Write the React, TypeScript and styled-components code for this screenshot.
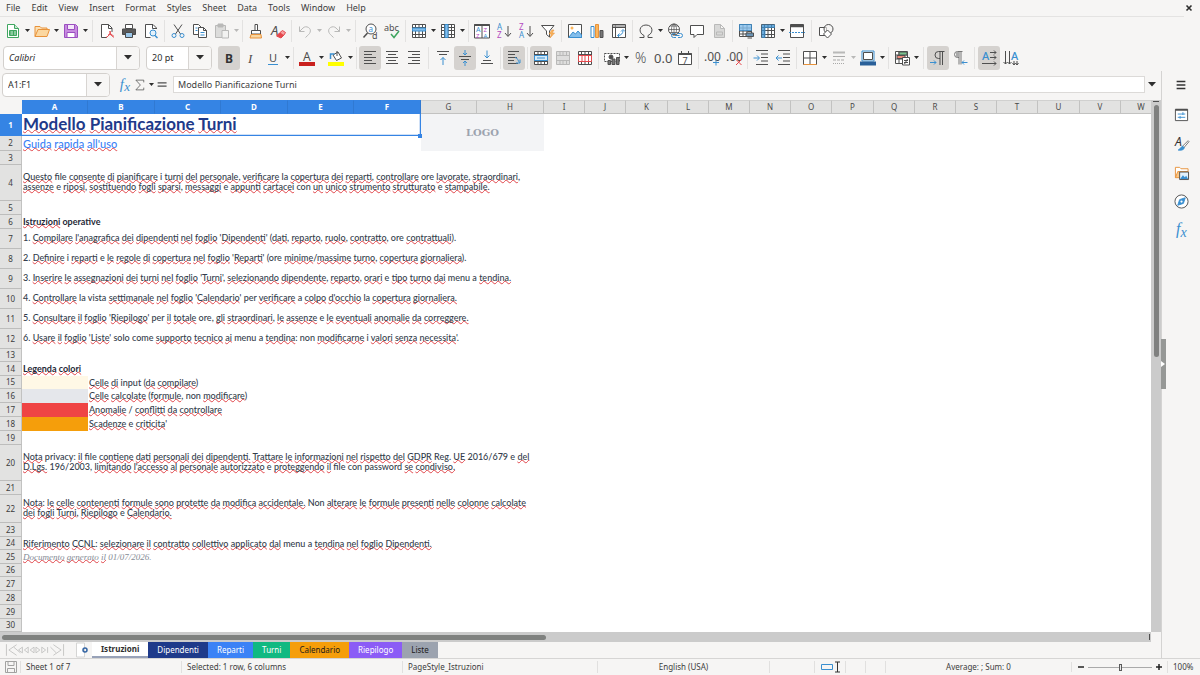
import React from 'react';
import styled, { createGlobalStyle, css } from 'styled-components';

const UI = '"Noto Sans", "Open Sans", sans-serif';
const DARK = '#4f4f4f';
const BLUE = '#3a8fd0';
const PALE = '#83beec';
const ORANGE = '#e8923a';
const RED = '#e5484d';
const GREEN = '#3fa660';
const PURPLE = '#b44ac0';
const GREY = '#b9b9b8';

const GlobalStyle = createGlobalStyle`
  * { box-sizing: border-box; }
  html, body, #root { height: 100%; }
  body { margin: 0; background: #f6f5f4; font-family: ${UI}; color: #3d3d3d; overflow: hidden; }
  button, input { font: inherit; color: inherit; margin: 0; padding: 0; border: 0; background: none; }
  svg { display: block; flex: none; overflow: visible; }
`;

const Window = styled.div`
  display: flex;
  flex-direction: column;
  height: 100vh;
  background: #f6f5f4;
`;

const MenuBar = styled.nav`
  display: flex;
  align-items: center;
  gap: 11px;
  height: 17px;
  flex: none;
  margin-right: 16px;
  padding-left: 6px;
  border-bottom: 1px solid #e4e3e2;
  font-size: 9px;
  line-height: 12px;
`;
const MenuItem = styled.button``;
const CloseButton = styled.button`
  position: absolute;
  top: 3px;
  right: 6px;
  width: 10px;
  height: 10px;
`;

const Toolbar = styled.div<{ $pad: number }>`
  display: flex;
  align-items: center;
  flex: none;
  height: 27px;
  padding-left: ${(p) => p.$pad}px;
`;
const Tool = styled.button<{ $on?: boolean }>`
  display: flex;
  align-items: center;
  justify-content: center;
  flex: none;
  width: 22px;
  height: 24px;
  border-radius: 3px;
  ${(p) => p.$on && css`background: #d5d2cf;`}
`;
const CaretButton = styled.button<{ $off?: boolean }>`
  display: flex;
  align-items: center;
  justify-content: center;
  flex: none;
  width: 7px;
  height: 24px;
  color: ${(p) => (p.$off ? '#b9b9b8' : '#2e2e2e')};
`;
const Separator = styled.span<{ $wide?: boolean }>`
  flex: none;
  width: 1px;
  height: 22px;
  margin: 0 ${(p) => (p.$wide ? 3 : 2)}px;
  background: #e3e2e1;
`;

const ComboGroup = styled.div`
  display: flex;
  gap: 6px;
  margin-right: 6px;
`;
const Combo = styled.div<{ $width: number }>`
  display: flex;
  flex: none;
  width: ${(p) => p.$width}px;
  height: 24px;
  border: 1px solid #d3d0cd;
  border-radius: 4px;
  background: #fff;
  overflow: hidden;
`;
const ComboInput = styled.input<{ $italic?: boolean }>`
  flex: 1;
  min-width: 0;
  padding-left: 5px;
  font-size: 9px;
  font-style: ${(p) => (p.$italic ? 'italic' : 'normal')};
  color: #2e2e2e;
`;
const ComboButton = styled.button`
  display: flex;
  align-items: center;
  justify-content: center;
  width: 23px;
  border-left: 1px solid #d8d5d2;
  background: #f7f6f5;
`;

const Main = styled.div`
  display: flex;
  flex: 1;
  min-height: 0;
`;
const Work = styled.div`
  display: flex;
  flex-direction: column;
  flex: 1;
  min-width: 0;
`;
const FormulaBar = styled.div`
  display: flex;
  align-items: center;
  flex: none;
  height: 27px;
  padding: 0 4px 0 2px;
  margin-bottom: 2px;
`;
const FormulaTools = styled.div`
  display: flex;
  align-items: center;
  margin: 0 3px 0 8px;
`;
const FormulaTool = styled.button<{ $width: number }>`
  display: flex;
  align-items: center;
  justify-content: center;
  width: ${(p) => p.$width}px;
  height: 20px;
`;
const FormulaInput = styled.input`
  flex: 1;
  min-width: 0;
  height: 17px;
  margin-right: 2px;
  padding-left: 4px;
  border: 1px solid #dcdad8;
  background: #fff;
  font-size: 9px;
`;

const SheetArea = styled.div`
  display: flex;
  flex: 1;
  min-height: 0;
`;
const SheetView = styled.div`
  flex: 1;
  min-width: 0;
  overflow: hidden;
  background: #fff;
`;
const VerticalTrack = styled.div`
  display: flex;
  flex-direction: column;
  align-items: center;
  width: 10px;
  flex: none;
  background: #cbcbcb;
`;
const Stopper = styled.span`
  width: 6px;
  height: 1px;
  margin: 1px 0 3px;
  background: #4f4f4f;
`;
const VerticalThumb = styled.span`
  width: 5px;
  height: 47.4%;
  border-radius: 3px;
  background: #7f807f;
`;
const HorizontalTrack = styled.div`
  display: flex;
  align-items: center;
  justify-content: space-between;
  flex: none;
  height: 10px;
  margin-right: 10px;
  padding: 0 1px 0 2px;
  background: #cbcbcb;
`;
const HorizontalThumb = styled.span`
  width: 47.4%;
  height: 5px;
  border-radius: 3px;
  background: #7f817f;
`;
const EndStopper = styled.span`
  width: 1px;
  height: 6px;
  background: #4f4f4f;
`;

const Grid = styled.table`
  width: 1162px;
  table-layout: fixed;
  border-collapse: separate;
  border-spacing: 0;
`;
const ColumnHead = styled.th<{ $on?: boolean }>`
  height: 14px;
  padding: 0;
  font-size: 8px;
  line-height: 12px;
  font-weight: ${(p) => (p.$on ? 700 : 400)};
  color: ${(p) => (p.$on ? '#fff' : '#4a4a4a')};
  background: ${(p) => (p.$on ? '#3584e4' : '#e2e2e1')};
  border-right: 1px solid ${(p) => (p.$on ? '#3079d2' : '#c2c2c1')};
  border-bottom: 1px solid ${(p) => (p.$on ? '#3584e4' : '#c2c2c1')};
  border-top: 1px solid ${(p) => (p.$on ? '#3584e4' : '#d0d0cf')};
`;
const Corner = styled.th`
  padding: 0;
  background: #f6f5f4;
`;
const RowHead = styled.th<{ $on?: boolean }>`
  padding: 0;
  font-size: 8px;
  line-height: 12px;
  font-weight: ${(p) => (p.$on ? 700 : 400)};
  color: ${(p) => (p.$on ? '#fff' : '#3d3d3d')};
  background: ${(p) => (p.$on ? '#3584e4' : '#e2e2e1')};
  border-right: 1px solid ${(p) => (p.$on ? '#3584e4' : '#c2c2c1')};
  border-bottom: 1px solid ${(p) => (p.$on ? '#3584e4' : '#bdbdbc')};
`;
const Row = styled.tr<{ $height: number }>`
  height: ${(p) => p.$height}px;
`;

type Look = 'title' | 'subtitle' | 'body' | 'strong' | 'note';
const looks: Record<Look, ReturnType<typeof css>> = {
  title: css`font: 700 17px/20px Lato, sans-serif; color: #1e3a8a;`,
  subtitle: css`font: 500 11px/14px Lato, sans-serif; color: #3b82f6;`,
  body: css`font: 500 9px/10px Lato, sans-serif; color: #333d4b;`,
  strong: css`font: 700 9px/10px Lato, sans-serif; color: #1f2937;`,
  note: css`font: italic 400 9px/11px "Liberation Serif", serif; color: #858b95;`,
};
const Cell = styled.td<{ $look?: Look; $fill?: string; $selected?: boolean; $tall?: boolean }>`
  position: relative;
  padding: 0 0 ${(p) => (p.$tall ? 2 : 0)}px 1px;
  white-space: pre;
  vertical-align: middle;
  ${(p) => looks[p.$look ?? 'body']}
  ${(p) => p.$fill && css`background: ${p.$fill};`}
  ${(p) => p.$selected && css`box-shadow: inset -1px -1px 0 #3584e4, inset -2px -2px 0 #cfe0f6;`}
`;
const FillHandle = styled.span`
  position: absolute;
  right: -1px;
  bottom: -2px;
  width: 4px;
  height: 4px;
  background: #3584e4;
`;
const LogoCell = styled.td`
  padding: 0;
  text-align: center;
  font: 700 10px/14px "DejaVu Serif", "Liberation Serif", serif;
  color: #9ca3af;
  background: #f3f4f6;
`;
const Misspelled = styled.span`
  text-decoration: underline wavy #e0454a 1px;
  text-decoration-skip-ink: none;
  text-underline-offset: -1px;
`;

const TabBar = styled.div`
  display: flex;
  align-items: stretch;
  flex: none;
  height: 16px;
  font-size: 8px;
  line-height: 14px;
`;
const TabNav = styled.div`
  display: flex;
  align-items: center;
  width: 70px;
  padding-left: 5px;
`;
const AddSheet = styled.button`
  display: flex;
  align-items: center;
  justify-content: center;
  width: 22px;
  padding-left: 2px;
`;
const Tab = styled.button<{ $bg: string; $fg: string; $on?: boolean }>`
  padding: 0 9px;
  color: ${(p) => p.$fg};
  background: ${(p) => p.$bg};
  ${(p) => p.$on && css`
    font-weight: 700;
    border-bottom: 2px solid #98a2b8;
  `}
`;

const Sidebar = styled.aside`
  position: relative;
  display: flex;
  flex-direction: column;
  align-items: center;
  width: 39px;
  flex: none;
  padding-top: 3px;
  border-left: 1px solid #d4d3d2;
`;
const SideButton = styled.button`
  display: flex;
  align-items: center;
  justify-content: center;
  width: 22px;
  height: 22px;
  margin-bottom: 7px;
`;
const SideHandle = styled.button`
  position: absolute;
  left: -1px;
  top: calc(50% - 26px);
  width: 5px;
  height: 50px;
  background: #969896;
  display: flex;
  align-items: center;
`;

const StatusBar = styled.footer`
  display: grid;
  grid-template-columns: 20px 161fr 221fr 195fr 172fr 45px 31px 20px 20px 186fr 96px 33px;
  align-items: center;
  flex: none;
  height: 17px;
  border-top: 1px solid #d6d5d4;
  font-size: 8px;
  line-height: 12px;
`;
const Status = styled.span<{ $center?: boolean; $rule?: boolean }>`
  display: flex;
  align-items: center;
  height: 12px;
  padding: 0 5px;
  white-space: nowrap;
  ${(p) => p.$center && css`justify-content: center;`}
  ${(p) => p.$rule && css`border-left: 1px solid #e1e0df;`}
`;
const ZoomControl = styled.div`
  display: flex;
  align-items: center;
  gap: 3px;
  padding: 0 4px 0 5px;
  border-left: 1px solid #e1e0df;
`;
const ZoomButton = styled.button`
  display: flex;
  flex: none;
`;
const ZoomRange = styled.input`
  appearance: none;
  flex: 1;
  min-width: 0;
  width: 10px;
  height: 10px;
  background: linear-gradient(#aaa, #aaa) center / 100% 1px no-repeat;
  &::-webkit-slider-thumb {
    appearance: none;
    width: 3px;
    height: 7px;
    border: 1px solid #5a5a5a;
    background: #e8e8e8;
  }
`;

function Svg({ size = 16, children }: { size?: number; children: React.ReactNode }) {
  return (
    <svg width={size} height={size} viewBox="0 0 16 16" fill="none" stroke={DARK} strokeWidth="1" aria-hidden="true">
      {children}
    </svg>
  );
}
const Triangle = () => (
  <svg width="5" height="3" viewBox="0 0 5 3" aria-hidden="true"><path d="M0 0h5L2.500 3z" fill="currentColor" /></svg>
);
const BigTriangle = () => (
  <svg width="8" height="5" viewBox="0 0 8 5" aria-hidden="true"><path d="M0 0h8L4 4.500z" fill="#2e2e2e" /></svg>
);
const glyph = (x: number, y: number, t: string, size: number, fill = DARK, extra: React.SVGProps<SVGTextElement> = {}) => (
  <text x={x} y={y} fontSize={size} fill={fill} stroke="none" fontFamily={UI} {...extra}>{t}</text>
);
const lines = (rows: [number, number, number][], color = DARK) =>
  rows.map(([x1, x2, y]) => <path key={`${x1}-${y}`} d={`M${x1} ${y}H${x2}`} stroke={color} />);
const gridLines = 'M1.500 1.500h13v13h-13zM1.500 4.500h13M1.500 7.500h13M1.500 11.500h13M4.500 1.500v13M8 1.500v13M11.500 1.500v13';
const serifItalic = { fontStyle: 'italic', fontFamily: '"Liberation Serif", serif' };

const icons: Record<string, React.ReactNode> = {
  new: <><path d="M2.500 1.500h7l4 4v9h-11z" stroke={GREEN} fill="#fff" /><path d="M9.500 1.500v4h4" stroke={GREEN} fill="#c8e8d0" /><path d="M4.500 7.500h7v5h-7z" fill={GREEN} stroke={GREEN} /><path d="M5.500 9H8M9 9h2M5.500 11H8M9 11h2" stroke="#d6f0dc" /></>,
  open: <><path d="M1 13.500V3.500h5l1.500 1.500H13v2" stroke={ORANGE} fill="#fbe0b5" /><path d="M1 13.500 4 6.500h11.500l-2.500 7z" fill="#fbd7a0" stroke={ORANGE} /></>,
  save: <><path d="M1.500 1.500h11l2 2v11h-13z" fill="#c88be0" stroke="#9b4fc0" /><path d="M4.500 1.500h7v5h-7z" fill="#f4e6fa" stroke="#9b4fc0" /><path d="M4 9.500h8v5H4z" fill="#fff" stroke="#9b4fc0" /></>,
  pdf: <><path d="M13 9V5L9.500 1.500h-7v13H8" fill="#fff" /><path d="M9.500 1.500v4H13" /><path d="M7 14.500c3-1.500 4.500-4 4-6.500M9 12c2-1 4-.5 6 1.500M11 8c0 3 2 5 3.500 6.500" stroke={RED} /></>,
  print: <><path d="M4.500 1.500h7v4h-7z" fill="#fff" /><path d="M1.500 6h13v5.500h-13z" fill="#5a5a5a" stroke="#4a4a4a" /><path d="M4.500 9.500h7v5h-7z" fill="#9cc8ea" stroke="#4a4a4a" /></>,
  preview: <><path d="M13.500 6V5L10 1.500H2.500v13h5" fill="#fff" /><path d="M9.500 1.500v4h4" /><circle cx="10" cy="10" r="3" stroke={BLUE} fill="#e3f1fb" /><path d="m12 12.500 2.500 2.500" stroke={BLUE} strokeWidth="1.500" /></>,
  cut: <><path d="M4 1.500 10.500 11M12 1.500 5.500 11" /><circle cx="4" cy="12.500" r="2" stroke={BLUE} /><circle cx="12" cy="12.500" r="2" stroke={BLUE} /></>,
  copy: <><path d="M1.500 1.500h5l3 3v7h-8z" fill="#fff" /><path d="M6.500 4.500h5l3 3v7h-8z" fill="#fff" /><path d="M11.500 4.500v3h3" /><path d="M8.500 9.500h4M8.500 12h4M3.500 5h2M3.500 7.500h2" stroke={BLUE} /></>,
  paste: <><path d="M1.500 2.500h10v12h-10z" fill="#dcdcdb" stroke={GREY} /><path d="M4 1h5v3H4z" fill={GREY} stroke={GREY} /><path d="M8 7.500h6.500v7.500H8z" fill="#f2f2f1" stroke={GREY} /></>,
  clone: <><path d="M7 1.500h2.500v6H7z" fill="#fff" /><path d="M3.500 7.500h9V11h-9z" fill="#fff" /><path d="M3 11.500h10l.5 3.500H2z" fill="#fbd7a0" stroke={ORANGE} /></>,
  clear: <>{glyph(1, 12, 'A', 13, DARK, { fontStyle: 'italic' })}<path d="m6.500 13 3.500-3.500 4 2.500-3 3z" fill={RED} stroke={RED} /><path d="m10 9.500 2.500-2 3 2-1.500 2.500" fill="#f6a0a2" stroke={RED} /></>,
  undo: <path d="M2.500 3.500v5h5M2.500 8.500 6 5c3-3 9 0 7 4.500-.5 1.500-2 2.500-4.500 5" stroke={GREY} />,
  redo: <path d="M13.500 3.500v5h-5M13.500 8.500 10 5C7 2 1 5 3 9.500c.5 1.500 2 2.500 4.500 5" stroke={GREY} />,
  find: <><circle cx="9" cy="6" r="5" fill="#fff" /><path d="m5.500 10-4 4.500" strokeWidth="1.500" />{glyph(6.500, 8.500, 'a', 8, BLUE)}{glyph(10, 15.500, 'd', 9)}</>,
  spell: <>{glyph(0, 8, 'abc', 9)}<path d="m7 11 3 3.500 5-6.500" stroke={GREEN} strokeWidth="1.500" /></>,
  row: <><path d={gridLines} fill="#fff" /><path d="M1.500 5h13v3h-13z" fill={PALE} stroke={BLUE} /></>,
  column: <><path d={gridLines} fill="#fff" /><path d="M5 1.500h3v13H5z" fill={PALE} stroke={BLUE} /></>,
  sort: <><path d="M.5 1.500h15v13.500H.5z" fill="#fff" /><path d="M.5 2h15" strokeWidth="2" /><path d="M8 3v12" />{glyph(2, 9, 'A', 7, BLUE)}{glyph(2, 14.500, 'Z', 6, PURPLE)}{glyph(9.500, 9, 'Z', 6, PURPLE)}{glyph(9.500, 14.500, 'A', 6, BLUE)}</>,
  asc: <>{glyph(1, 7, 'A', 8, BLUE)}{glyph(1, 15, 'Z', 8, PURPLE)}<path d="M12 3v10M9 10l3 3.500 3-3.500" /></>,
  desc: <>{glyph(1, 7, 'Z', 8, PURPLE)}{glyph(1, 15, 'A', 8, BLUE)}<path d="M12 3v10M9 10l3 3.500 3-3.500" /></>,
  filter: <><path d="M1.500 2.500h12.500L9.500 8v6L6.500 11.500V8z" fill="#fff" /><path d="m12 7-3 4h2.500l-1.500 4 4.500-5h-2.500l2-3z" fill="#fbb65d" stroke={ORANGE} strokeWidth=".6" /></>,
  image: <><path d="M1.500 1.500h13v13h-13z" fill="#fff" /><path d="m2 14 4-5 2.500 2L11 8l3.500 4v2.500H2z" fill={PALE} stroke={BLUE} /><circle cx="5" cy="5" r="1.500" fill="#fbb65d" stroke="none" /></>,
  chart: <><path d="M2 3.500h3v11H2z" fill="#fff" stroke={BLUE} /><path d="M6.500 1.500h3v13h-3z" fill="#fbb65d" stroke={ORANGE} /><path d="M11 7.500h3v7h-3z" fill="#777" /></>,
  pivot: <><path d="M1.500 1.500h13v13h-13zM1.500 4.500h13M4.500 1.500v13" fill="#fff" /><path d="M2 3h12" strokeWidth="1.500" stroke="#999" /><path d="M7 12.500c3 0 5-2 5-5M12 6.500 10 8.500M12 6.500l2 2M6.500 12.500l2-2M6.500 12.500l2 2" stroke={BLUE} /></>,
  omega: <path d="M1.500 14.500H6v-2C0 10 1 2 8 2s8 8 2 10.500v2h4.500" />,
  link: <><circle cx="7" cy="6.500" r="5.500" fill="#fff" /><path d="M1.500 6.500h11M7 1v11M3 3h8M2.500 9.500h9" strokeWidth=".7" /><ellipse cx="7" cy="6.500" rx="2.500" ry="5.500" strokeWidth=".7" /><path d="M8 10.500H6.500a2 2 0 0 0 0 4H9M11 10.500h2.500a2 2 0 0 1 0 4H11M8 12.500h4.500" stroke={BLUE} /></>,
  comment: <path d="M1.500 2.500h13v9H8L5 14.500v-3H1.500z" fill="#fff" />,
  header: <path d="M3.500 1.500h6l4 4v9h-10zM9.500 1.500v4h4M5.500 9h6v3h-6z" fill="#d8d8d7" stroke={GREY} />,
  area: <><path d="M1.500 1.500h12v12h-12zM1.500 5h12M1.500 8h12M1.500 11h12M5 1.500v12M9 1.500v12" fill="#fff" /><path d="M1.500 1.500h12v6h-12z" fill={PALE} stroke={BLUE} opacity=".8" /><path d="M8 10h7.500v3.500H8z" fill="#6b94b5" /><path d="M9.500 8.500h4.500M9.500 15h4.500" /></>,
  freeze: <><path d={gridLines} fill="#fff" /><path d="M2 2h12.500v2.500H5v10H2z" fill={BLUE} stroke={BLUE} opacity=".75" /></>,
  split: <><path d="M1.500 1.500h13v13h-13z" fill="#fff" /><path d="M1.500 3h13" strokeWidth="2.500" /><path d="M0 9.500h16" stroke={BLUE} strokeDasharray="2 1" /></>,
  shapes: <><path d="M1.500 4.500h7v8h-7z" fill="#fff" /><circle cx="10.500" cy="6" r="4.500" fill="#f6f5f4" fillOpacity=".6" /><path d="m9.500 7 4 4-4 4-4-4z" fill="#fff" /></>,
  bold: glyph(4, 12.500, 'B', 12, '#333', { fontWeight: 700 }),
  italic: glyph(5, 12.500, 'I', 13, DARK, serifItalic),
  underline: <>{glyph(4, 11.500, 'U', 11)}<path d="M3 14.500h10" stroke={BLUE} /></>,
  fontcolor: <>{glyph(4, 10.500, 'A', 12)}<path d="M0 14h16" stroke="#c9211e" strokeWidth="4" /></>,
  highlight: <><path d="m5 5 5-3 3.500 6-5 2.500z" fill="#fff" /><path d="M2.500 9V4h4" stroke={BLUE} strokeWidth="1.500" /><path d="M9 1v5" /><path d="M0 14h16" stroke="#ffff00" strokeWidth="4" /></>,
  left: <>{lines([[2, 14, 1.5], [2, 10, 4.5], [2, 14, 7.5], [2, 10, 10.5], [2, 14, 13.5]])}</>,
  center: <>{lines([[2, 14, 1.5], [4, 12, 4.5], [2, 14, 7.5], [4, 12, 10.5], [2, 14, 13.5]])}</>,
  right: <>{lines([[2, 14, 1.5], [6, 14, 4.5], [2, 14, 7.5], [6, 14, 10.5], [2, 14, 13.5]])}</>,
  top: <>{lines([[2, 14, 1.5], [4, 12, 4.5]])}<path d="M8 15V7.500M5.500 10 8 7.500l2.500 2.500" stroke={BLUE} /></>,
  middle: <>{lines([[2, 14, 6.5], [4, 12, 9.5]])}<path d="M8 0v5M6 3l2 2 2-2M8 16v-5M6 13l2-2 2 2" stroke={BLUE} /></>,
  bottom: <>{lines([[4, 12, 10.5], [2, 14, 13.5]])}<path d="M8 .500V8M5.500 5.500 8 8l2.500-2.500" stroke={BLUE} /></>,
  wrap: <>{lines([[2, 13, 1.5], [2, 9, 4.5], [2, 11, 7.5], [2, 8, 10.5], [2, 12, 13.5]])}<path d="M9 7.500c3 0 3 4 4.500 5M14 9.500V13h-4" stroke={BLUE} /></>,
  merge: <><path d="M1.500 1.500h13v13h-13zM1.500 4.500h13M1.500 11.500h13M5 1.500v3M8 1.500v3M11.500 1.500v3M5 11.500v3M8 11.500v3M11.500 11.500v3" fill="#fff" /><path d="M1.500 5.500h13v5h-13z" fill="#d6ebf9" stroke={BLUE} /><path d="M4 8h8" stroke={BLUE} /></>,
  mergecells: <path d="M1.500 1.500h13v13h-13zM1.500 5.500h13M1.500 10.500h13M5 1.500v4M8 1.500v4M11.500 1.500v4M5 10.500v4M8 10.500v4M11.500 10.500v4" fill="#dededd" stroke={GREY} />,
  unmerge: <><path d={gridLines} fill="#fff" /><path d="M1.500 5.500h13v6h-13zM5 5.500v6M8 5.500v6M11.500 5.500v6" fill="#fff" stroke={RED} /></>,
  currency: <><path d="M.5 3.500h15v8H.5z" fill="#fff" strokeDasharray="2 1" /><circle cx="7" cy="7" r="2" fill={DARK} /><path d="M4 10.500h2.500v4H4zM8 9h3v5.500H8zM12.500 7.500H15v7h-2.500z" fill="#777" /></>,
  percent: glyph(2, 13, '%', 14, DARK, { fontWeight: 300 }),
  number: glyph(-1, 13, '0.0', 13, DARK, { fontFamily: '"Liberation Sans Narrow", "Noto Sans"' }),
  date: <><path d="M1.500 3.500h13v11h-13z" fill="#fff" /><path d="M1.500 4h13" strokeWidth="2" /><path d="M4.500 1v3M11.500 1v3" />{glyph(5.500, 13.500, '7', 9)}</>,
  addDecimal: <>{glyph(0, 11, '.00', 12, DARK, { fontFamily: '"Liberation Sans Narrow", "Noto Sans"' })}<path d="M12 9.500v6M9 12.500h6" stroke={BLUE} /></>,
  removeDecimal: <>{glyph(0, 11, '.00', 12, DARK, { fontFamily: '"Liberation Sans Narrow", "Noto Sans"' })}<path d="m10 9.500 5.500 5.500M15.500 9.500 10 15" stroke={RED} /></>,
  indent: <>{lines([[3, 15, .5], [8, 15, 4], [8, 15, 7.5], [8, 15, 11], [3, 15, 14.5]])}<path d="M.5 8H6M4 5.500 6.500 8 4 10.500" stroke={BLUE} /></>,
  outdent: <>{lines([[3, 15, .5], [8, 15, 4], [8, 15, 7.5], [8, 15, 11], [3, 15, 14.5]])}<path d="M1 8h6M3.500 5.500 1 8l2.500 2.500" stroke={BLUE} /></>,
  border: <><path d="M1.500 1.500h13v13h-13zM8 1.500v13M1.500 8h13" fill="#fff" /><path d="M1.500 14.500h13" stroke={ORANGE} /></>,
  style: <><path d="M2 2.500h12" strokeWidth="2" stroke={GREY} /><path d="M2 6.500h12" stroke="#a9a9a8" /><path d="M2 10h12" stroke="#a9a9a8" strokeDasharray="3 1" /><path d="M2 13.500h12" stroke="#a9a9a8" strokeDasharray="1 1" /></>,
  bordercolor: <><path d="M3.500 2.500h9v7h-9z" fill="#fff" stroke={DARK} /><path d="M2 1h12v10H2z" stroke={BLUE} /><path d="M0 13.500h16" stroke="#2a6099" strokeWidth="4" /></>,
  conditional: <><path d="M1.500 1.500h12v12h-12zM1.500 5h12M1.500 9h12M5 1.500v12" fill="#fff" /><path d="M5 2h8v3H5z" fill="#7bc48e" /><path d="M3 5.500h8v3H3z" fill="#ee8a7c" /><path d="M8.500 7.500h7v7.500h-7z" fill="#fff" /><path d="M10 10.500h4M10 12.500h4M13.500 9l-3 5" /></>,
  ltr: <><path d="M14.500 1.500H8.500a3.500 3.500 0 0 0 0 7H10M10 1.500v13.500M12.500 1.500v13.500" /><path d="M0 12.500h6M4 10.500l2 2-2 2" stroke={BLUE} /></>,
  rtl: <><path d="M10.500 1.500H5.500a3 3 0 0 0 0 6H7M7 1.500v13M9 1.500v13" stroke="#777" /><path d="M5.500 2v5" stroke="#aaa" strokeWidth="3" /><path d="M15.500 12.500H10M12 10.500l-2 2 2 2" stroke={BLUE} /></>,
  horizontal: <>{glyph(1, 10, 'A', 11, BLUE, { fontWeight: 500 })}<path d="M9 2.500h6M13 .500l2 2-2 2M9 7.500h6M13 5.500l2 2-2 2M1 13.500h14M13 11.500l2 2-2 2" /></>,
  vertical: <>{glyph(8, 10, 'A', 11, BLUE, { fontWeight: 500 })}<path d="M2.500 1v13M.5 12l2 2 2-2M6.500 1v13M4.500 12l2 2 2-2M11 11v4M9.500 13l1.500 2 1.500-2M14 11v4M12.500 13l1.500 2 1.500-2" /></>,
  fx: <>{glyph(2, 12, 'f', 17, BLUE, serifItalic)}{glyph(7, 15, 'x', 15, BLUE, serifItalic)}</>,
  sum: <path d="M13 4.500v-3H2.500L8.500 8l-6 6.500H13v-3" />,
  equals: <path d="M2 6h11M2 10h11" strokeWidth="1.500" />,
  burger: <path d="M3 4h10M3 8h10M3 12h10" stroke="#333" strokeWidth="1.500" />,
  props: <><path d="M1.500 2.500h13v12h-13z" fill="#fff" /><path d="M1.500 3h13" strokeWidth="2" /><path d="M4 7.500h8M4 11h8M9.500 5.500v3M6.500 9.500v3" stroke={BLUE} /></>,
  styles: <>{glyph(1, 11, 'A', 13, '#333', { fontStyle: 'italic' })}<path d="m15 5-6 6 1.500 1.500L16 6z" fill="#fff" strokeWidth=".8" /><path d="M9.500 11c-2 0-2.500 3-5 4 3 .5 6 0 6.500-2.500z" fill={BLUE} stroke={BLUE} /></>,
  gallery: <><path d="M1.500 13.500v-11h4.500l1.500 1.500H15v3" fill="#fff" stroke={ORANGE} /><path d="M1.500 13.500 4 7h11v6.500z" fill="#fbc887" stroke={ORANGE} /><path d="M6 7.500h9.500v8H6z" fill="#e3f1fb" /><path d="m6.500 15 3-4 2 2 1.500-1.500 2 3.500z" fill={BLUE} stroke="none" /></>,
  navigator: <><circle cx="8" cy="8" r="7" fill="#fff" /><path d="m12 4-2 6-6 2 2-6z" fill={BLUE} stroke={BLUE} /><circle cx="8" cy="8" r="1.200" fill="#fff" stroke="none" /></>,
};

type Item = { icon?: string; label?: string; on?: boolean; caret?: boolean; off?: boolean; wide?: boolean };
const i = (icon: string, label: string, extra: Partial<Item> = {}): Item => ({ icon, label, ...extra });
const c = { caret: true };
const sep: Item = {};
const wideSep: Item = { wide: true };

const standard: Item[] = [
  i('new', 'New', c), i('open', 'Open', c), i('save', 'Save', c), wideSep,
  i('pdf', 'Export as PDF'), i('print', 'Print'), i('preview', 'Print Preview'), sep,
  i('cut', 'Cut'), i('copy', 'Copy'), i('paste', 'Paste', { caret: true, off: true }), sep,
  i('clone', 'Clone Formatting'), i('clear', 'Clear Formatting'), sep,
  i('undo', 'Undo', { caret: true, off: true }), i('redo', 'Redo', { caret: true, off: true }), wideSep,
  i('find', 'Find and Replace'), i('spell', 'Spelling'), sep,
  i('row', 'Row', c), i('column', 'Column', c), sep,
  i('sort', 'Sort'), i('asc', 'Sort Ascending'), i('desc', 'Sort Descending'), i('filter', 'AutoFilter'), sep,
  i('image', 'Image'), i('chart', 'Chart'), i('pivot', 'Pivot Table'), sep,
  i('omega', 'Special Character', c), i('link', 'Hyperlink'), i('comment', 'Comment'), i('header', 'Headers and Footers'), sep,
  i('area', 'Print Area'), i('freeze', 'Freeze Rows and Columns', c), i('split', 'Split Window'), wideSep,
  i('shapes', 'Draw Functions'),
];
const formatting: Item[] = [
  i('bold', 'Bold', { on: true }), i('italic', 'Italic'), i('underline', 'Underline', c), sep,
  i('fontcolor', 'Font Color', c), i('highlight', 'Background Color', c), sep,
  i('left', 'Align Left', { on: true }), i('center', 'Center Horizontally'), i('right', 'Align Right'), wideSep,
  i('top', 'Align Top'), i('middle', 'Center Vertically', { on: true }), i('bottom', 'Align Bottom'), sep,
  i('wrap', 'Wrap Text', { on: true }), sep,
  i('merge', 'Merge and Center', { on: true }), i('mergecells', 'Merge Cells'), i('unmerge', 'Unmerge Cells'), sep,
  i('currency', 'Currency', c), i('percent', 'Percent'), i('number', 'Number'), i('date', 'Date'), sep,
  i('addDecimal', 'Add Decimal Place'), i('removeDecimal', 'Delete Decimal Place'), sep,
  i('indent', 'Increase Indent'), i('outdent', 'Decrease Indent'), sep,
  i('border', 'Borders', c), i('style', 'Border Style', { caret: true, off: true }), i('bordercolor', 'Border Color', c), sep,
  i('conditional', 'Conditional', c), wideSep,
  i('ltr', 'Left-To-Right', { on: true }), i('rtl', 'Right-To-Left'), wideSep,
  i('horizontal', 'Text direction from left to right', { on: true }), i('vertical', 'Text direction from top to bottom'),
];

function Tools({ items }: { items: Item[] }) {
  return (
    <>
      {items.map((item, n) =>
        item.icon ? (
          <React.Fragment key={n}>
            <Tool $on={item.on} aria-label={item.label}><Svg>{icons[item.icon]}</Svg></Tool>
            {item.caret && <CaretButton $off={item.off} aria-label={`${item.label} options`}><Triangle /></CaretButton>}
          </React.Fragment>
        ) : (
          <Separator key={n} $wide={item.wide} />
        ),
      )}
    </>
  );
}

const knownWords = new Set(
  ['file', 'i', 'la', 'ore', 'e', 'con', 'operative', 'vista', 'per', 'a', 'solo', 'come', 'menu', 'non', 'input', 'privacy', 'reg', 'password'],
);
const wordPattern = /(\p{L}+(?:['.]\p{L}+)*\.?)/u;

function Checked({ text }: { text: string }) {
  return (
    <>
      {text.split(wordPattern).map((part, n) =>
        n % 2 && !knownWords.has(part.replace('.', '').toLowerCase()) ? <Misspelled key={n}>{part}</Misspelled> : part,
      )}
    </>
  );
}

type SheetRow = { h: number; text?: string; look?: Look; fill?: string };
const rows: SheetRow[] = [
  { h: 22, text: 'Modello Pianificazione Turni', look: 'title' },
  { h: 15, text: "Guida rapida all'uso", look: 'subtitle' },
  { h: 14 },
  { h: 36, text: 'Questo file consente di pianificare i turni del personale, verificare la copertura dei reparti, controllare ore lavorate, straordinari,\nassenze e riposi, sostituendo fogli sparsi, messaggi e appunti cartacei con un unico strumento strutturato e stampabile.' },
  { h: 14 },
  { h: 14, text: 'Istruzioni operative', look: 'strong' },
  { h: 20, text: "1. Compilare l'anagrafica dei dipendenti nel foglio 'Dipendenti' (dati, reparto, ruolo, contratto, ore contrattuali)." },
  { h: 20, text: "2. Definire i reparti e le regole di copertura nel foglio 'Reparti' (ore minime/massime turno, copertura giornaliera)." },
  { h: 20, text: "3. Inserire le assegnazioni dei turni nel foglio 'Turni', selezionando dipendente, reparto, orari e tipo turno dai menu a tendina." },
  { h: 20, text: "4. Controllare la vista settimanale nel foglio 'Calendario' per verificare a colpo d'occhio la copertura giornaliera." },
  { h: 20, text: "5. Consultare il foglio 'Riepilogo' per il totale ore, gli straordinari, le assenze e le eventuali anomalie da correggere." },
  { h: 20, text: "6. Usare il foglio 'Liste' solo come supporto tecnico ai menu a tendina: non modificarne i valori senza necessita'." },
  { h: 13 },
  { h: 14, text: 'Legenda colori', look: 'strong' },
  { h: 13, text: 'Celle di input (da compilare)', fill: '#fff8e6' },
  { h: 14, text: 'Celle calcolate (formule, non modificare)', fill: '#e5e7eb' },
  { h: 14, text: 'Anomalie / conflitti da controllare', fill: '#ef4444' },
  { h: 14, text: "Scadenze e criticita'", fill: '#f59e0b' },
  { h: 14 },
  { h: 36, text: 'Nota privacy: il file contiene dati personali dei dipendenti. Trattare le informazioni nel rispetto del GDPR Reg. UE 2016/679 e del\nD.Lgs. 196/2003, limitando l\'accesso al personale autorizzato e proteggendo il file con password se condiviso.' },
  { h: 14 },
  { h: 28, text: 'Nota: le celle contenenti formule sono protette da modifica accidentale. Non alterare le formule presenti nelle colonne calcolate\ndei fogli Turni, Riepilogo e Calendario.' },
  { h: 14 },
  { h: 13, text: 'Riferimento CCNL: selezionare il contratto collettivo applicato dal menu a tendina nel foglio Dipendenti.' },
  { h: 14, text: 'Documento generato il 01/07/2026.', look: 'note' },
  { h: 13 }, { h: 14 }, { h: 14 }, { h: 14 }, { h: 13 },
];

const columns = 'ABCDEFGHIJKLMNOPQRSTUVW'.split('');
const columnWidths = [66, 67, 66, 67, 66, 67, 56, 67, 41, 41, 42, 41, 41, 41, 41, 42, 41, 41, 41, 41, 42, 41, 41];

function Spreadsheet() {
  return (
    <Grid>
      <colgroup>
        <col width={22} />
        {columnWidths.map((w, n) => <col key={n} width={w} />)}
      </colgroup>
      <thead>
        <tr>
          <Corner />
          {columns.map((name, n) => <ColumnHead key={name} scope="col" $on={n < 6}>{name}</ColumnHead>)}
        </tr>
      </thead>
      <tbody>
        {rows.map((row, n) => (
          <Row key={n} $height={row.h}>
            <RowHead scope="row" $on={n === 0}>{n + 1}</RowHead>
            {row.fill && <Cell $fill={row.fill} />}
            {n < 2 ? (
              <Cell colSpan={6} $look={row.look} $selected={n === 0} $tall={n === 0}>
                <Checked text={row.text!} />
                {n === 0 && <FillHandle />}
              </Cell>
            ) : (
              <Cell colSpan={row.fill ? 7 : 8} $look={row.look} $tall={row.h >= 20}>{row.text && <Checked text={row.text} />}</Cell>
            )}
            {n === 0 && <LogoCell colSpan={2} rowSpan={2}>LOGO</LogoCell>}
          </Row>
        ))}
      </tbody>
    </Grid>
  );
}

const tabs = [
  { name: 'Istruzioni', bg: '#ffffff', fg: '#2e2e2e' },
  { name: 'Dipendenti', bg: '#1e3a8a', fg: '#ffffff' },
  { name: 'Reparti', bg: '#3b82f6', fg: '#ffffff' },
  { name: 'Turni', bg: '#10b981', fg: '#ffffff' },
  { name: 'Calendario', bg: '#f59e0b', fg: '#1c1c1c' },
  { name: 'Riepilogo', bg: '#8b5cf6', fg: '#ffffff' },
  { name: 'Liste', bg: '#9ca3af', fg: '#1c1c1c' },
];

export default function App() {
  return (
    <Window>
      <GlobalStyle />
      <MenuBar>
        {['File', 'Edit', 'View', 'Insert', 'Format', 'Styles', 'Sheet', 'Data', 'Tools', 'Window', 'Help'].map((m) => (
          <MenuItem key={m}>{m}</MenuItem>
        ))}
      </MenuBar>
      <CloseButton aria-label="Close document">
        <svg width="10" height="10" viewBox="0 0 10 10"><path d="m2.500 2.500 5 5M7.500 2.500l-5 5" stroke="#2e2e2e" strokeWidth="1.600" /></svg>
      </CloseButton>
      <Toolbar $pad={2}><Tools items={standard} /></Toolbar>
      <Toolbar $pad={3}>
        <ComboGroup>
          <Combo $width={137}>
            <ComboInput $italic defaultValue="Calibri" aria-label="Font name" />
            <ComboButton aria-label="Font list"><BigTriangle /></ComboButton>
          </Combo>
          <Combo $width={66}>
            <ComboInput defaultValue="20 pt" aria-label="Font size" />
            <ComboButton aria-label="Size list"><BigTriangle /></ComboButton>
          </Combo>
        </ComboGroup>
        <Tools items={formatting} />
      </Toolbar>
      <Main>
        <Work>
          <FormulaBar>
            <Combo $width={108}>
              <ComboInput defaultValue="A1:F1" aria-label="Name box" />
              <ComboButton aria-label="Named ranges"><BigTriangle /></ComboButton>
            </Combo>
            <FormulaTools>
              <FormulaTool $width={14} aria-label="Function Wizard"><Svg size={14}>{icons.fx}</Svg></FormulaTool>
              <FormulaTool $width={16} aria-label="Select Function"><Svg size={12}>{icons.sum}</Svg></FormulaTool>
              <CaretButton aria-label="Function options"><Triangle /></CaretButton>
              <FormulaTool $width={15} aria-label="Formula"><Svg size={13}>{icons.equals}</Svg></FormulaTool>
            </FormulaTools>
            <FormulaInput defaultValue="Modello Pianificazione Turni" aria-label="Input line" />
            <FormulaTool $width={10} aria-label="Expand formula bar"><BigTriangle /></FormulaTool>
          </FormulaBar>
          <SheetArea>
            <SheetView><Spreadsheet /></SheetView>
            <VerticalTrack><Stopper /><VerticalThumb /></VerticalTrack>
          </SheetArea>
          <HorizontalTrack><HorizontalThumb /><EndStopper /></HorizontalTrack>
          <TabBar>
            <TabNav>
              <svg width="60" height="12" viewBox="0 0 62 12" fill="none" stroke="#c6c6c5" aria-hidden="true">
                <path d="M1.500 0v12M12 .5 4 6l8 5.500M9 3l7 6M18 3l-4 3 4 3zM24 3l-4 3 4 3zM30 3l-4 3 4 3zM32 3l4 3-4 3zM38 3l4 3-4 3zM44 3v6M47 3l6 6M50 .5 58 6l-8 5.500M60.500 0v12" />
              </svg>
            </TabNav>
            <AddSheet aria-label="Add sheet">
              <svg width="14" height="14" viewBox="0 0 14 14" fill="none">
                <path d="M1.500 0h8v14h-8z" fill="#fff" stroke="#d5d5d4" />
                <circle cx="10" cy="7" r="2" stroke="#3465a4" strokeWidth="1.500" />
              </svg>
            </AddSheet>
            {tabs.map((t, n) => <Tab key={t.name} $bg={t.bg} $fg={t.fg} $on={n === 0}>{t.name}</Tab>)}
          </TabBar>
        </Work>
        <Sidebar>
          {[['burger', 'Sidebar Settings'], ['props', 'Properties'], ['styles', 'Styles'], ['gallery', 'Gallery'], ['navigator', 'Navigator'], ['fx', 'Functions']].map(([name, label]) => (
            <SideButton key={name} aria-label={label}><Svg size={name === 'burger' ? 14 : 15}>{icons[name]}</Svg></SideButton>
          ))}
          <SideHandle aria-label="Hide sidebar">
            <svg width="4" height="6" viewBox="0 0 4 6"><path d="M0 0v6l4-3z" fill="#fff" /></svg>
          </SideHandle>
        </Sidebar>
      </Main>
      <StatusBar>
        <Status>
          <svg width="12" height="12" viewBox="0 0 12 12" fill="none" stroke="#a2a2a1"><path d="M.5 .5h11v11H.5zM3 .5v4h6v-4M2.500 11.500v-4h7v4" /></svg>
        </Status>
        <Status $rule>Sheet 1 of 7</Status>
        <Status $rule>Selected: 1 row, 6 columns</Status>
        <Status $rule>PageStyle_Istruzioni</Status>
        <Status $rule $center>English (USA)</Status>
        <Status $rule />
        <Status $rule>
          <svg width="20" height="12" viewBox="0 0 20 12" fill="none"><path d="M1.500 3.500h11v5h-11z" stroke={BLUE} /><path d="M15 1h5M15 11h5M17.500 1v10" stroke="#333" /></svg>
        </Status>
        <Status $rule />
        <Status $rule />
        <Status $rule $center>Average: ; Sum: 0</Status>
        <ZoomControl>
          <ZoomButton aria-label="Zoom out"><svg width="8" height="8" viewBox="0 0 8 8"><path d="M1 4h6" stroke="#222" strokeWidth="1.500" /></svg></ZoomButton>
          <ZoomRange type="range" min={0} max={100} defaultValue={50} aria-label="Zoom" />
          <ZoomButton aria-label="Zoom in"><svg width="8" height="8" viewBox="0 0 8 8"><path d="M1 4h6M4 1v6" stroke="#222" strokeWidth="1.500" /></svg></ZoomButton>
        </ZoomControl>
        <Status $rule>100%</Status>
      </StatusBar>
    </Window>
  );
}
